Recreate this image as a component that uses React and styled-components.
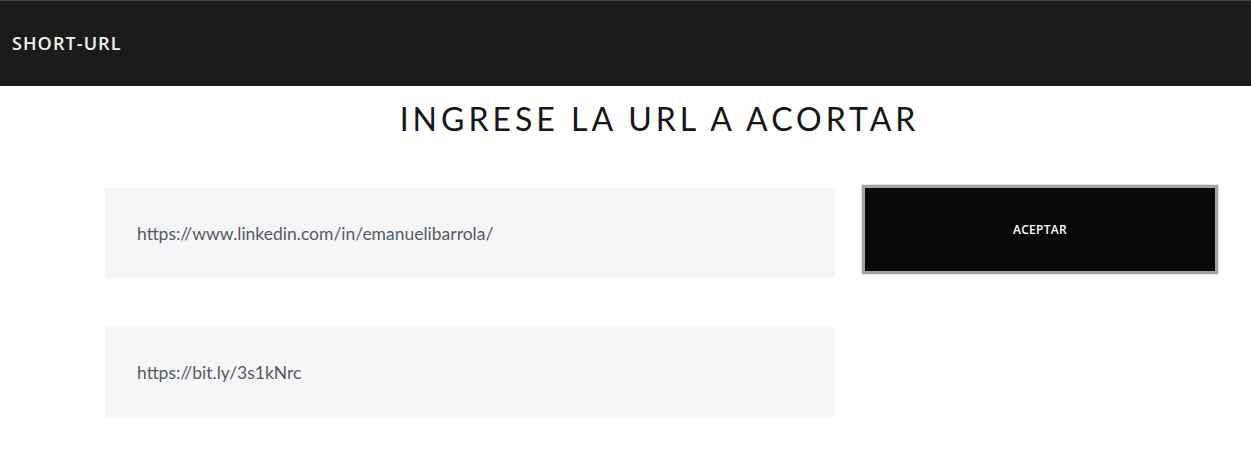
import React from 'react'
import styled, { createGlobalStyle } from 'styled-components'

const GlobalStyle = createGlobalStyle`
  html, body {
    margin: 0;
    padding: 0;
    background: #fff;
  }
  body {
    font-family: 'Open Sans', 'Liberation Sans', sans-serif;
  }
`

const Navbar = styled.header`
  height: 85px;
  background: #1b1b1b;
  border-top: 1px solid #4a4a4a;
  display: flex;
  align-items: center;
  padding: 0 12px;
`

const Brand = styled.div`
  font-family: 'Open Sans', sans-serif;
  font-size: 18px;
  font-weight: 600;
  color: #f2f2f2;
  letter-spacing: 1.1px;
  margin-top: -2px;
`

const Main = styled.main`
  padding: 0 33px 0 105px;
  display: flex;
  flex-direction: column;
`

const Title = styled.h1`
  margin: 13px 0 0;
  text-align: center;
  font-family: 'Lato', 'Open Sans', sans-serif;
  font-size: 32px;
  font-weight: 400;
  letter-spacing: 4px;
  color: #161616;
  line-height: 40px;
  padding-right: 4px;
`

const Form = styled.div`
  margin-top: 49px;
  display: grid;
  grid-template-columns: 730px 1fr;
  column-gap: 27px;
  row-gap: 49px;
  align-items: start;
`

const Field = styled.div`
  height: 90px;
  background: #f6f6f8;
  display: flex;
  align-items: center;
  padding-left: 32px;
  font-family: 'Lato', 'Open Sans', sans-serif;
  font-size: 17.5px;
  color: #555a60;
`

const Button = styled.button`
  margin-top: -3px;
  height: 89px;
  background: #080808;
  border: 3px solid #a3a3a3;
  outline: 1px solid #e4e4e4;
  color: #fff;
  font-family: 'Open Sans', sans-serif;
  font-size: 12px;
  font-weight: 600;
  letter-spacing: 0.3px;
  cursor: pointer;
`

const App = () => {
  return (
    <>
      <GlobalStyle />
      <Navbar>
        <Brand>SHORT-URL</Brand>
      </Navbar>
      <Main>
        <Title>INGRESE LA URL A ACORTAR</Title>
        <Form>
          <Field>https://www.linkedin.com/in/emanuelibarrola/</Field>
          <Button>ACEPTAR</Button>
          <Field>https://bit.ly/3s1kNrc</Field>
        </Form>
      </Main>
    </>
  )
}

export default App
